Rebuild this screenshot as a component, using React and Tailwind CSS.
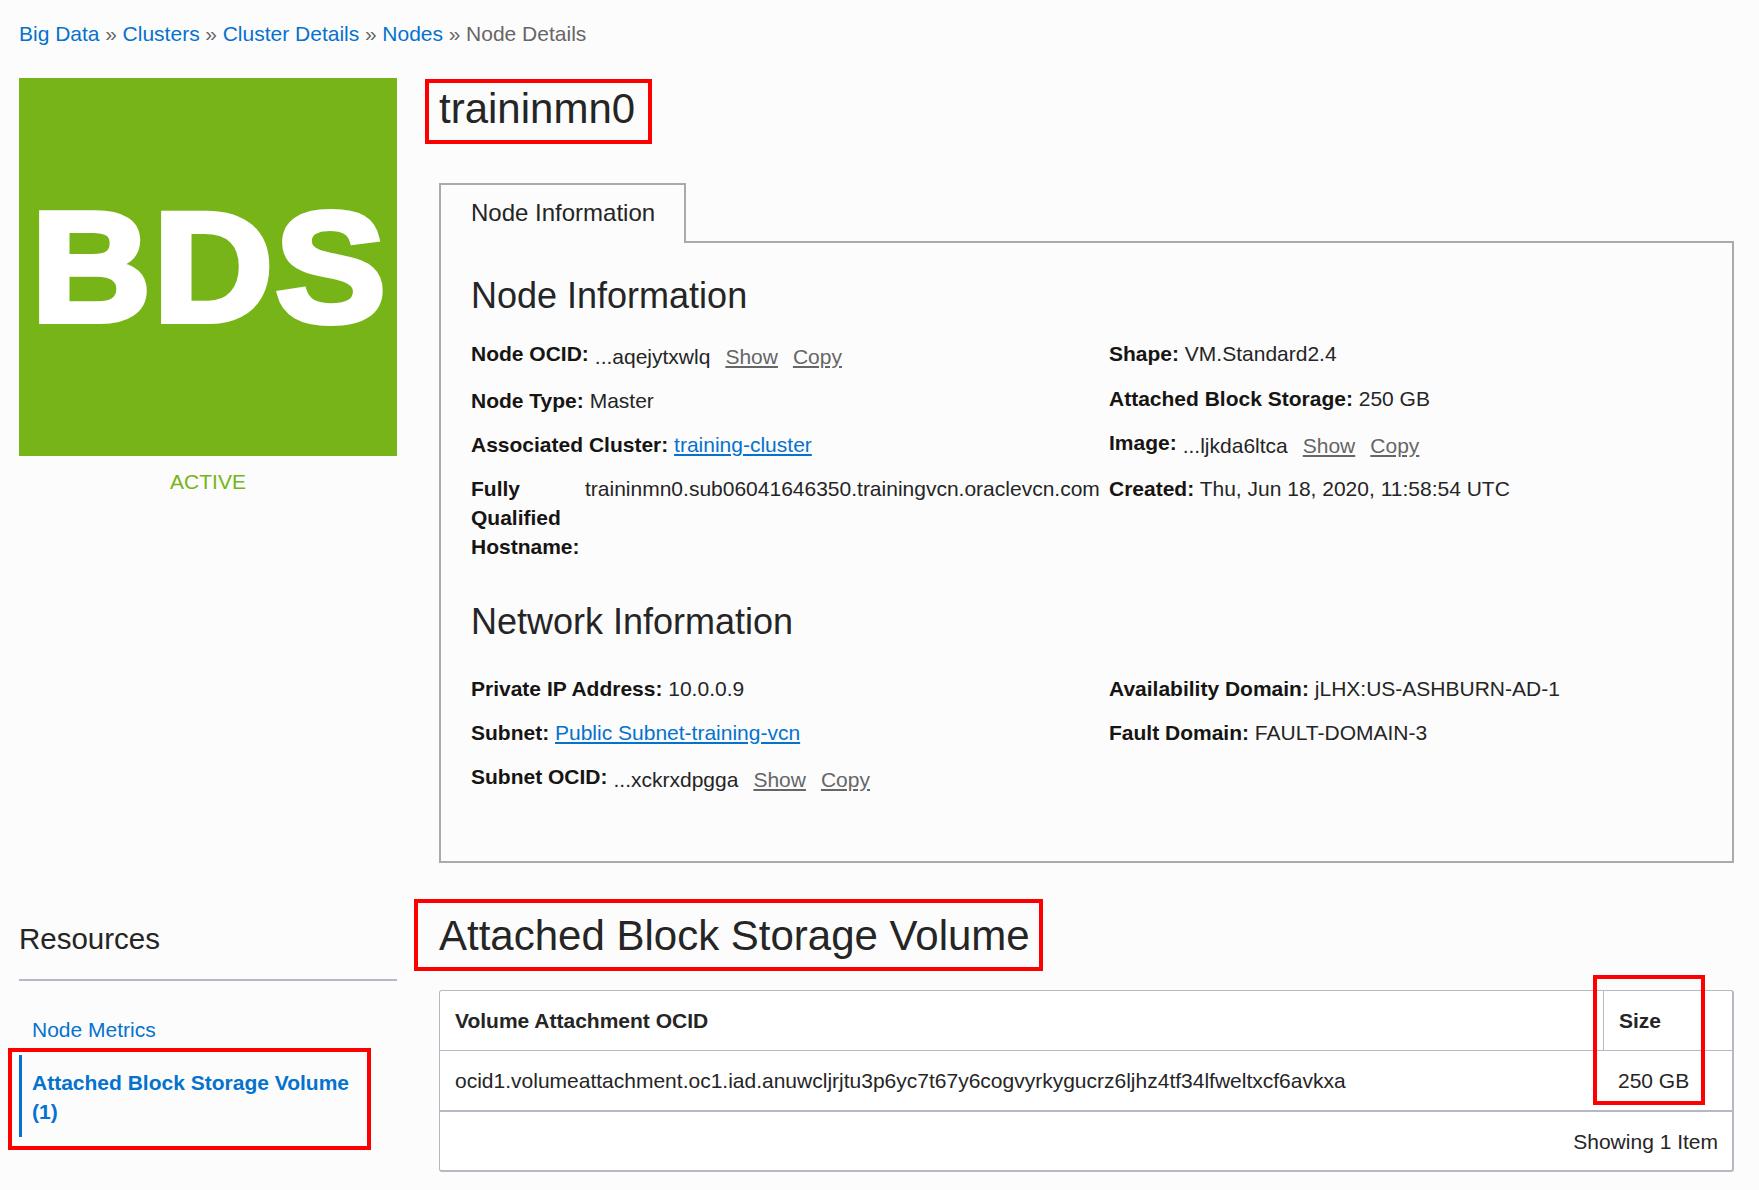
const Sep = () => <span className="mx-[5.7px] text-[#666]">»</span>;

const Crumb = ({ children }) => <a className="text-[#0572ce]">{children}</a>;

const Label = ({ children }) => <b className="font-bold text-[#161513]">{children}</b>;

const Action = ({ children }) => <a className="ml-[15px] text-[#666] underline">{children}</a>;

const Link = ({ children }) => <a className="text-[#0572ce] underline">{children}</a>;

const Row = ({ label, children, className = 'h-[44px]' }) => (
  <div className={`leading-[29px] ${className}`}>
    <Label>{label}</Label> {children}
  </div>
);

const OcidRow = ({ label, value, className }) => (
  <div className={`flex items-start leading-[29px] ${className}`}>
    <Label>{label}</Label>
    <div className="ml-[6px] mt-[3px]">
      {value}
      <Action>Show</Action>
      <Action>Copy</Action>
    </div>
  </div>
);

const RedBox = ({ className }) => (
  <div className={`absolute border-4 border-[#ff0000] pointer-events-none ${className}`} />
);

export default function App() {
  return (
    <div className="min-h-[1190px] w-[1759px] bg-[#fcfcfc] font-['Liberation_Sans',Arial,sans-serif] text-[21px] text-[#252525] overflow-hidden">
      <div className="h-[78px] pl-[19px] pt-[19px] leading-[29px] text-[#666]">
        <Crumb>Big Data</Crumb><Sep /><Crumb>Clusters</Crumb><Sep /><Crumb>Cluster Details</Crumb><Sep /><Crumb>Nodes</Crumb><Sep />Node Details
      </div>

      <div className="flex pl-[19px]">
        <div className="w-[378px] shrink-0">
          <div className="flex h-[378px] items-center justify-center bg-[#76b417] pl-[3px] font-bold text-[155px] leading-none text-white [-webkit-text-stroke:6px_white]">
            <span className="inline-block scale-x-[1.07] tracking-[2px]">BDS</span>
          </div>
          <div className="mt-[11px] text-center leading-[29px] text-[#76b417]">ACTIVE</div>
        </div>

        <div className="ml-[42px] w-[1295px]">
          <div className="relative h-[105px]">
            <h1 className="pt-[6px] text-[42px] leading-[50px] text-[#252525]">traininmn0</h1>
            <RedBox className="left-[-14px] top-[1px] h-[65px] w-[227px]" />
          </div>

          <div className="relative z-10 -mb-[2px] flex h-[60px] w-[247px] items-start border-2 border-b-0 border-[#aaaaaa] bg-[#fcfcfc] pl-[30px] pt-[13px] text-[24px] leading-[29px]">
            Node Information
          </div>

          <div className="h-[622px] border-2 border-[#aaaaaa] pl-[30px]">
            <h2 className="mt-[31px] text-[36px] leading-[44px]">Node Information</h2>
            <div className="mt-[21px] flex">
              <div className="w-[638px] shrink-0">
                <OcidRow label="Node OCID:" value="...aqejytxwlq" className="h-[47px]" />
                <Row label="Node Type:">Master</Row>
                <Row label="Associated Cluster:"><Link>training-cluster</Link></Row>
                <div className="flex leading-[29px]">
                  <div className="w-[114px] shrink-0"><Label>Fully Qualified Hostname:</Label></div>
                  <div>traininmn0.sub06041646350.trainingvcn.oraclevcn.com</div>
                </div>
              </div>
              <div>
                <Row label="Shape:" className="h-[45px]">VM.Standard2.4</Row>
                <Row label="Attached Block Storage:">250 GB</Row>
                <OcidRow label="Image:" value="...ljkda6ltca" className="h-[46px]" />
                <Row label="Created:">Thu, Jun 18, 2020, 11:58:54 UTC</Row>
              </div>
            </div>

            <h2 className="mt-[39px] text-[36px] leading-[44px]">Network Information</h2>
            <div className="mt-[30px] flex">
              <div className="w-[638px] shrink-0">
                <Row label="Private IP Address:">10.0.0.9</Row>
                <Row label="Subnet:"><Link>Public Subnet-training-vcn</Link></Row>
                <OcidRow label="Subnet OCID:" value="...xckrxdpgga" />
              </div>
              <div>
                <Row label="Availability Domain:">jLHX:US-ASHBURN-AD-1</Row>
                <Row label="Fault Domain:">FAULT-DOMAIN-3</Row>
              </div>
            </div>
          </div>
        </div>
      </div>

      <div className="mt-[35px] flex pl-[19px]">
        <div className="relative w-[378px] shrink-0">
          <h3 className="border-b-2 border-[#b5b9c4] pb-[23px] pt-[24px] text-[29.5px] leading-[34px]">Resources</h3>
          <div className="pl-[13px] pt-[34px] leading-[29px] text-[#0572ce]">Node Metrics</div>
          <div className="mt-[11px] w-[340px] border-l-[3px] border-[#0572ce] pb-[11px] pl-[10px] pt-[13px] font-bold leading-[29px] text-[#0572ce]">
            Attached Block Storage Volume (1)
          </div>
          <RedBox className="left-[-11px] top-[150px] h-[102px] w-[363px]" />
        </div>

        <div className="ml-[42px] w-[1295px]">
          <div className="relative h-[92px]">
            <h1 className="pt-[13px] text-[42px] leading-[50px]">Attached Block Storage Volume</h1>
            <RedBox className="left-[-25px] top-[1px] h-[72px] w-[629px]" />
          </div>
          <div className="relative rounded-[3px] border-2 border-t border-[#b5b9c4] border-l bg-white">
            <div className="flex h-[60px] border-b border-[#b5b9c4] font-bold">
              <div className="flex flex-1 items-center pl-[15px]">Volume Attachment OCID</div>
              <div className="flex w-[129px] items-center border-l border-[#b5b9c4] pl-[15px]">Size</div>
            </div>
            <div className="flex h-[61px] border-b-2 border-[#b5b9c4]">
              <div className="flex flex-1 items-center pl-[15px]">ocid1.volumeattachment.oc1.iad.anuwcljrjtu3p6yc7t67y6cogvyrkygucrz6ljhz4tf34lfweltxcf6avkxa</div>
              <div className="flex w-[129px] items-center pl-[15px]">250 GB</div>
            </div>
            <div className="flex h-[58px] items-center justify-end pr-[14px] pt-[2px]">Showing 1 Item</div>
            <RedBox className="right-[27px] top-[-16px] h-[130px] w-[112px]" />
          </div>
        </div>
      </div>
    </div>
  );
}
